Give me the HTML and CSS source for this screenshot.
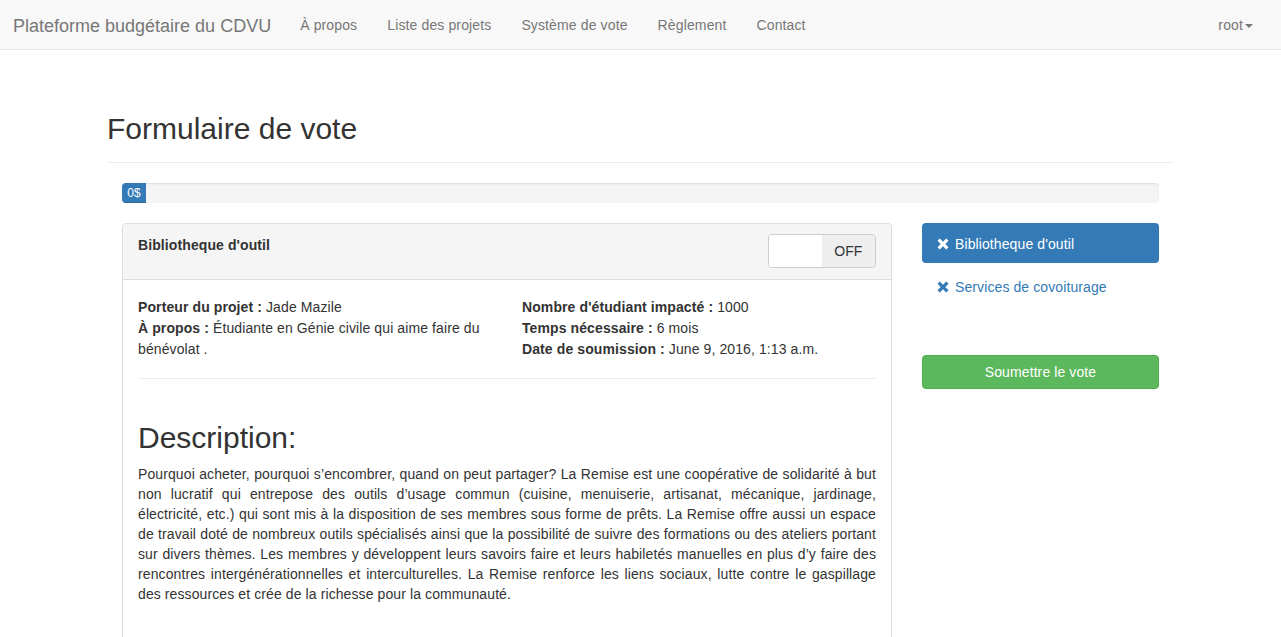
FILE: index.html
```html
<!DOCTYPE html>
<html lang="fr">
<head>
<meta charset="utf-8">
<title>Formulaire de vote</title>
<link rel="stylesheet" href="styles.css">
</head>
<body>
<nav class="navbar">
  <a class="brand" href="#">Plateforme budgétaire du CDVU</a>
  <ul class="nav-links">
    <li><a href="#">À propos</a></li>
    <li><a href="#">Liste des projets</a></li>
    <li><a href="#">Système de vote</a></li>
    <li><a href="#">Règlement</a></li>
    <li><a href="#">Contact</a></li>
  </ul>
  <div class="nav-right"><a href="#">root<span class="caret"></span></a></div>
</nav>

<main class="container">
  <div class="page-header"><h1>Formulaire de vote</h1></div>
  <div class="content">
    <div class="progress"><div class="progress-bar">0$</div></div>
    <div class="layout">
      <section class="panel">
        <div class="panel-heading">
          <h3 class="panel-title">Bibliotheque d'outil</h3>
          <div class="switch"><span class="switch-on"></span><span class="switch-off">OFF</span></div>
        </div>
        <div class="panel-body">
          <div class="info-row">
            <div class="info-col">
              <b>Porteur du projet :</b> Jade Mazile<br>
              <b>À propos :</b> Étudiante en Génie civile qui aime faire du bénévolat .
            </div>
            <div class="info-col">
              <b>Nombre d'étudiant impacté :</b> 1000<br>
              <b>Temps nécessaire :</b> 6 mois<br>
              <b>Date de soumission :</b> June 9, 2016, 1:13 a.m.
            </div>
          </div>
          <hr>
          <h2>Description:</h2>
          <p class="desc">Pourquoi acheter, pourquoi s’encombrer, quand on peut partager? La Remise est une coopérative de solidarité à but non lucratif qui entrepose des outils d’usage commun (cuisine, menuiserie, artisanat, mécanique, jardinage, électricité, etc.) qui sont mis à la disposition de ses membres sous forme de prêts. La Remise offre aussi un espace de travail doté de nombreux outils spécialisés ainsi que la possibilité de suivre des formations ou des ateliers portant sur divers thèmes. Les membres y développent leurs savoirs faire et leurs habiletés manuelles en plus d’y faire des rencontres intergénérationnelles et interculturelles. La Remise renforce les liens sociaux, lutte contre le gaspillage des ressources et crée de la richesse pour la communauté.</p>
        </div>
      </section>
      <aside class="sidebar">
        <ul class="pills">
          <li class="active"><a href="#"><svg class="icon" viewBox="0 0 12 12"><path d="M0.5 2.8 L2.8 0.5 L6 3.7 L9.2 0.5 L11.5 2.8 L8.3 6 L11.5 9.2 L9.2 11.5 L6 8.3 L2.8 11.5 L0.5 9.2 L3.7 6 Z"/></svg>Bibliotheque d'outil</a></li>
          <li><a href="#"><svg class="icon" viewBox="0 0 12 12"><path d="M0.5 2.8 L2.8 0.5 L6 3.7 L9.2 0.5 L11.5 2.8 L8.3 6 L11.5 9.2 L9.2 11.5 L6 8.3 L2.8 11.5 L0.5 9.2 L3.7 6 Z"/></svg>Services de covoiturage</a></li>
        </ul>
        <button class="btn-success" type="button">Soumettre le vote</button>
      </aside>
    </div>
  </div>
</main>
</body>
</html>
```
FILE: styles.css
```css
* { box-sizing: border-box; }
html, body { margin: 0; padding: 0; }
body {
  font-family: "Liberation Sans", Arial, Helvetica, sans-serif;
  font-size: 14px;
  line-height: 20px;
  letter-spacing: 0.1px;
  color: #333;
  background: #fff;
}
a { text-decoration: none; }

.navbar {
  display: flex;
  align-items: flex-start;
  height: 50px;
  background: #f8f8f8;
  border-bottom: 1px solid #e7e7e7;
  overflow: hidden;
}
.brand {
  color: #777;
  font-size: 18px;
  line-height: 20px;
  letter-spacing: 0;
  padding: 16px 14px 14px 13px;
}
.nav-links {
  list-style: none;
  margin: 0;
  padding: 0;
  display: flex;
}
.nav-links a, .nav-right a {
  display: block;
  color: #777;
  padding: 15px 15px;
  line-height: 21px;
  letter-spacing: 0.13px;
}
.nav-right { margin-left: auto; }
.nav-right a { padding-right: 28px; }
.caret {
  display: inline-block;
  width: 0; height: 0;
  margin-left: 2px;
  vertical-align: middle;
  border-top: 4px solid #777;
  border-left: 4px solid transparent;
  border-right: 4px solid transparent;
}

.container {
  width: 1067px;
  margin: 0 auto;
}
.page-header {
  margin-top: 62px;
  padding-bottom: 17px;
  border-bottom: 1px solid #eee;
}
.page-header h1 {
  margin: 0;
  font-size: 30px;
  font-weight: 500;
  line-height: 33px;
  letter-spacing: 0;
}
.content { padding: 0 15px; }

.progress {
  margin-top: 20px;
  height: 20px;
  background: #f5f5f5;
  border-radius: 4px;
  box-shadow: inset 0 1px 2px rgba(0,0,0,.1);
  overflow: hidden;
}
.progress-bar {
  width: 24px;
  height: 20px;
  background: #337ab7;
  color: #fff;
  font-size: 12px;
  line-height: 20px;
  letter-spacing: 0;
  text-align: center;
  box-shadow: inset 0 -1px 0 rgba(0,0,0,.15);
}

.layout {
  margin-top: 20px;
  display: grid;
  grid-template-columns: 770px 237px;
  column-gap: 30px;
  align-items: start;
}

.panel {
  border: 1px solid #ddd;
  border-radius: 4px;
  box-shadow: 0 1px 1px rgba(0,0,0,.05);
  padding-bottom: 60px;
}
.panel-heading {
  display: flex;
  justify-content: space-between;
  align-items: flex-start;
  padding: 10px 15px 11px;
  background: #f5f5f5;
  border-bottom: 1px solid #ddd;
  border-radius: 3px 3px 0 0;
}
.panel-title {
  margin: 0;
  font-size: 14px;
  font-weight: bold;
  line-height: 23px;
}
.switch {
  display: flex;
  width: 108px;
  height: 34px;
  border: 1px solid #ccc;
  border-radius: 4px;
  overflow: hidden;
  background: #fff;
}
.switch-on { width: 53px; background: #fff; }
.switch-off {
  width: 54px;
  background: #eee;
  color: #333;
  text-align: center;
  line-height: 32px;
  font-size: 14px;
  letter-spacing: 0;
}

.panel-body { padding: 17px 15px 15px; }
.info-row {
  display: grid;
  grid-template-columns: 1fr 1fr;
  column-gap: 30px;
  line-height: 21px;
}
hr {
  margin: 18px 0 20px;
  border: 0;
  border-top: 1px solid #eee;
}
h2 {
  margin: 42px 0 10px;
  font-size: 30px;
  font-weight: 500;
  line-height: 33px;
  letter-spacing: 0;
}
.desc {
  margin: 0 0 10px;
  text-align: justify;
}

.sidebar { display: flex; flex-direction: column; }
.pills { list-style: none; margin: 0; padding: 0; }
.pills li + li { margin-top: 2px; }
.pills a {
  display: flex;
  align-items: center;
  padding: 11px 15px 9px;
  line-height: 20px;
  color: #337ab7;
  border-radius: 4px;
}
.pills li + li a { padding-top: 12px; padding-bottom: 8px; }
.pills li.active a { background: #337ab7; color: #fff; }
.icon {
  width: 12px;
  height: 12px;
  margin-right: 6px;
  fill: currentColor;
  flex: none;
}
.btn-success {
  margin-top: 50px;
  height: 34px;
  width: 100%;
  background: #5cb85c;
  border: 1px solid #4cae4c;
  border-radius: 4px;
  color: #fff;
  font-family: inherit;
  font-size: 14px;
  letter-spacing: 0.1px;
  line-height: 20px;
  padding: 6px 12px;
}
```
